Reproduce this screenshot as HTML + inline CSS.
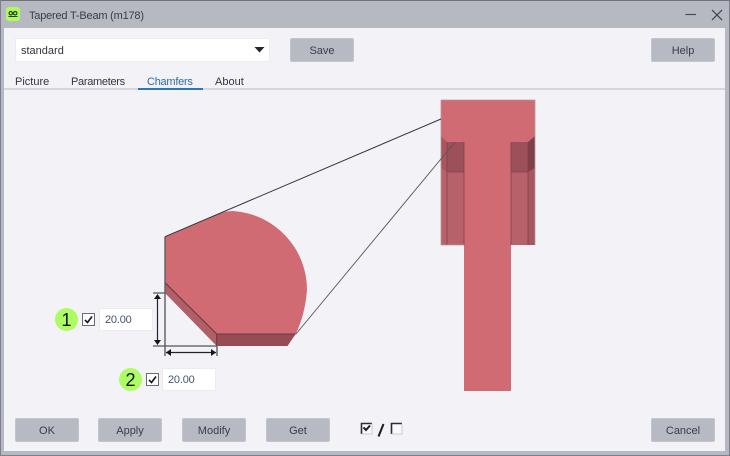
<!DOCTYPE html>
<html>
<head>
<meta charset="utf-8">
<style>
html,body{margin:0;padding:0;width:730px;height:456px;overflow:hidden;background:#b6b9c2}
body{position:relative;font-family:"Liberation Sans",sans-serif;font-size:11px;color:#3c3f4a}
div{position:absolute;box-sizing:border-box}
.btn{background:#b7bac3;border:1px solid #c3c5cd;border-radius:2px;height:24px;width:64px;text-align:center;line-height:25px;color:#3a3d48}
.tab{top:75px;line-height:14px;color:#33363f;white-space:nowrap}
.inp{background:#fff;border:1px solid #ebebf0;width:54px;height:23px;line-height:23px;padding-left:5px;font-size:11px;letter-spacing:-.2px;color:#46526a}
.num{background:#aefc64;border-radius:50%;width:23px;height:23px;text-align:center;line-height:24px;font-size:18px;color:#10130c}
</style>
</head>
<body>
<div style="left:0;top:0;width:730px;height:1px;background:#6f727e"></div>
<div style="left:0;top:0;width:1px;height:456px;background:#7d808c"></div>
<div style="left:729px;top:0;width:1px;height:456px;background:#7d808c"></div>
<div style="left:0;top:455px;width:730px;height:1px;background:#7d808c"></div>

<div style="left:6px;top:7px;width:14px;height:14px;background:#aefc5a;border-radius:3px"></div>
<svg style="position:absolute;left:6px;top:7px" width="14" height="14" viewBox="0 0 14 14">
<circle cx="4.8" cy="6.2" r="1.7" fill="none" stroke="#2c3a18" stroke-width="1.2"/>
<circle cx="9.2" cy="6.2" r="1.7" fill="none" stroke="#2c3a18" stroke-width="1.2"/>
<path d="M2.5 9.5H11.5" stroke="#2c3a18" stroke-width="1"/>
</svg>
<div style="left:29px;top:9px;line-height:14px;font-size:11px;letter-spacing:-.2px;color:#3a3d48;white-space:nowrap">Tapered T-Beam (m178)</div>
<svg style="position:absolute;left:680px;top:6px" width="46" height="18" viewBox="0 0 46 18">
<path d="M5.500 8.500H16" stroke="#4a4d58" stroke-width="1.2"/>
<path d="M32 4L42 14M42 4L32 14" stroke="#3a3d48" stroke-width="1.200" fill="none"/>
</svg>

<div style="left:4px;top:28px;width:721px;height:423px;background:#f2f2f7"></div>

<div style="left:15px;top:38px;width:255px;height:24px;background:#fff;border:1px solid #ebebf0;line-height:24px;padding-left:5px;color:#30333c">standard</div>
<svg style="position:absolute;left:254px;top:46px" width="12" height="8"><path d="M0.500 1H10.500L5.500 6.500Z" fill="#25272e"/></svg>
<div class="btn" style="left:290px;top:38px">Save</div>
<div class="btn" style="left:651px;top:38px">Help</div>

<div class="tab" style="left:15px">Picture</div>
<div class="tab" style="left:71px;letter-spacing:-.3px">Parameters</div>
<div class="tab" style="left:147px;color:#2c6da6;letter-spacing:-.25px">Chamfers</div>
<div class="tab" style="left:215px">About</div>
<div style="left:4px;top:88px;width:721px;height:2px;background:#d6d7dd"></div>
<div style="left:138px;top:88px;width:65px;height:2px;background:#2a78b8"></div>

<svg style="position:absolute;left:0;top:0" width="730" height="456" viewBox="0 0 730 456">
<path d="M441 100H535V245H511V391H464V245H441Z" fill="#d16b73"/>
<path d="M441 136L447 142V172L441 168Z" fill="#a9565f"/>
<path d="M447 142H464V172H447Z" fill="#9c5059"/>
<path d="M447 172H464V245H447Z" fill="#b7626b"/>
<path d="M441 168L447 172V245H441Z" fill="#b7626b"/>
<path d="M511 142H528V172H511Z" fill="#9c5059"/>
<path d="M528 142L535 136V168L528 172Z" fill="#80404a"/>
<path d="M511 172H528V245H511Z" fill="#b7626b"/>
<path d="M528 172L535 168V245H528Z" fill="#a5565f"/>
<path d="M447 142V245M528 142V245M447 172H464M511 172H528M464 142V245M511 142V245" stroke="#80404a" stroke-width="0.800" fill="none"/>
<path d="M441 100H535V245M441 100V245H464" stroke="#b5979b" stroke-width="0.800" fill="none"/>

<path d="M165 236.700L222 212.400Q228 211 233 211A79 79 0 0 1 307 290Q305 315 295.700 334H216.700L165 282.700Z" fill="#d16b73"/>
<path d="M165 282.700L216.700 334V346L165 293Z" fill="#b05f66"/>
<path d="M216.700 334H295.700L287.500 346H216.700Z" fill="#974c55"/>
<path d="M165 282.700L216.700 334V346M216.700 334H295.700" stroke="#6f3840" stroke-width="1.100" fill="none"/>

<path d="M165 236.700L441 119" stroke="#33353c" stroke-width="1" fill="none"/>
<path d="M296 334L455 142" stroke="#55575e" stroke-width="0.900" fill="none"/>
<path d="M165 236.700V356M217 346V356" stroke="#5c5e65" stroke-width="1.400" fill="none"/>
<path d="M153 293H165M153 346H217" stroke="#55575e" stroke-width="1.200" fill="none"/>
<path d="M157.500 295V344M166 352.500H216" stroke="#22242a" stroke-width="1.200" fill="none"/>
<path d="M157.500 294L154 299H161ZM157.500 345L154 340H161Z" fill="#15171c"/>
<path d="M166 352.500L171 349V356ZM216 352.500L211 349V356Z" fill="#15171c"/>
</svg>

<div class="num" style="left:55px;top:308px">1</div>
<div class="num" style="left:119px;top:368px">2</div>

<svg style="position:absolute;left:82px;top:313px" width="14" height="14"><rect x="0.500" y="0.500" width="12" height="12" fill="#fff" stroke="#6a6c74"/><path d="M3 7L5.500 9.500L10 3.500" fill="none" stroke="#1a1c20" stroke-width="1.700"/></svg>
<svg style="position:absolute;left:146px;top:373px" width="14" height="14"><rect x="0.500" y="0.500" width="12" height="12" fill="#fff" stroke="#6a6c74"/><path d="M3 7L5.500 9.500L10 3.500" fill="none" stroke="#1a1c20" stroke-width="1.700"/></svg>
<div class="inp" style="left:99px;top:308px">20.00</div>
<div class="inp" style="left:162px;top:368px">20.00</div>

<div class="btn" style="left:15px;top:418px">OK</div>
<div class="btn" style="left:98px;top:418px">Apply</div>
<div class="btn" style="left:182px;top:418px">Modify</div>
<div class="btn" style="left:266px;top:418px">Get</div>
<div class="btn" style="left:651px;top:418px">Cancel</div>

<svg style="position:absolute;left:358px;top:420px" width="48" height="18" viewBox="0 0 48 18">
<rect x="3" y="3" width="11" height="11" fill="#fafafc"/>
<path d="M3.500 14V3.500H14" stroke="#2c2e34" stroke-width="1.600" fill="none"/>
<path d="M14 3.500V14H3.500" stroke="#c9cad0" stroke-width="1" fill="none"/>
<path d="M5.500 7.500L8 10L12 5.500" stroke="#1a1c20" stroke-width="2" fill="none"/>
<path d="M20.500 16.500L25.500 4" stroke="#1a1c20" stroke-width="2" fill="none"/>
<rect x="33" y="3" width="11" height="11" fill="#fafafc"/>
<path d="M33.500 14V3.500H44" stroke="#2c2e34" stroke-width="1.600" fill="none"/>
<path d="M44 3.500V14H33.500" stroke="#c9cad0" stroke-width="1" fill="none"/>
</svg>
</body>
</html>
